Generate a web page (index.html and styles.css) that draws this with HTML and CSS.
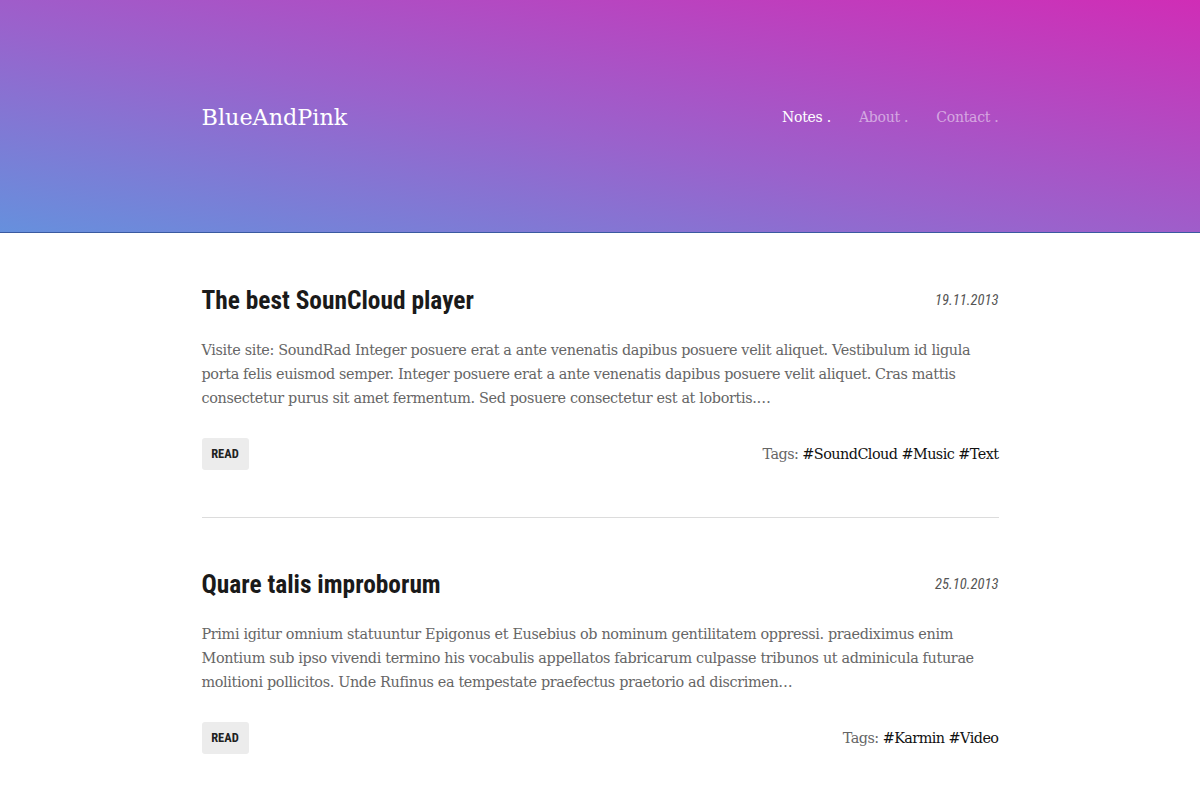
FILE: index.html
```html
<!DOCTYPE html>
<html lang="en">
<head>
<meta charset="utf-8">
<title>BlueAndPink</title>
<link rel="stylesheet" href="styles.css">
</head>
<body>
<header class="site-header">
  <div class="container header-inner">
    <a class="logo" href="#">BlueAndPink</a>
    <nav class="nav">
      <a class="nav-link active" href="#">Notes .</a>
      <a class="nav-link" href="#">About .</a>
      <a class="nav-link" href="#">Contact .</a>
    </nav>
  </div>
</header>
<main class="container">
  <article class="post">
    <div class="post-head">
      <h2 class="post-title">The best SounCloud player</h2>
      <span class="post-date">19.11.2013</span>
    </div>
    <p class="post-text">Visite site: SoundRad Integer posuere erat a ante venenatis dapibus posuere velit aliquet. Vestibulum id ligula porta felis euismod semper. Integer posuere erat a ante venenatis dapibus posuere velit aliquet. Cras mattis consectetur purus sit amet fermentum. Sed posuere consectetur est at lobortis.…</p>
    <div class="post-foot">
      <a class="btn-read" href="#">READ</a>
      <div class="tags">Tags: <a href="#">#SoundCloud</a> <a href="#">#Music</a> <a href="#">#Text</a></div>
    </div>
  </article>
  <article class="post">
    <div class="post-head">
      <h2 class="post-title">Quare talis improborum</h2>
      <span class="post-date">25.10.2013</span>
    </div>
    <p class="post-text">Primi igitur omnium statuuntur Epigonus et Eusebius ob nominum gentilitatem oppressi. praediximus enim Montium sub ipso vivendi termino his vocabulis appellatos fabricarum culpasse tribunos ut adminicula futurae molitioni pollicitos. Unde Rufinus ea tempestate praefectus praetorio ad discrimen…</p>
    <div class="post-foot">
      <a class="btn-read" href="#">READ</a>
      <div class="tags">Tags: <a href="#">#Karmin</a> <a href="#">#Video</a></div>
    </div>
  </article>
</main>
</body>
</html>
```

FILE: styles.css
```css
html, body {
  margin: 0;
  padding: 0;
  background: #fff;
}
body {
  font-family: "Roboto Slab", "DejaVu Serif", serif;
  color: #666;
}
a { text-decoration: none; }

.container {
  width: 797px;
  margin: 0 auto;
}

.site-header {
  height: 232px;
  background: linear-gradient(to top right, #6690dd 0%, #9a62cc 45%, #d02db6 100%);
  border-bottom: 1px solid #3a5aa0;
}
.header-inner {
  display: flex;
  align-items: center;
  justify-content: space-between;
  padding-top: 101px;
}
.logo {
  font-family: "Roboto Slab", "DejaVu Serif", serif;
  font-size: 22.3px;
  line-height: 32px;
  color: #fff;
}
.nav {
  display: flex;
  gap: 28px;
}
.nav-link {
  font-family: "Roboto Slab", "DejaVu Serif", serif;
  font-size: 14px;
  letter-spacing: -0.25px;
  color: rgba(255,255,255,0.5);
}
.nav-link.active {
  color: #fff;
}

.post {
  padding: 52px 0 47px;
  border-bottom: 1px solid #dcdcdc;
}
.post + .post {
  padding-top: 51px;
}
.post:last-child { border-bottom: none; }
.post-head {
  display: flex;
  justify-content: space-between;
  align-items: center;
}
.post-title {
  margin: 0;
  font-family: "Roboto Condensed", "Roboto", sans-serif;
  font-stretch: condensed;
  font-weight: 700;
  font-size: 25.4px;
  line-height: 30px;
  color: #1a1a1a;
}
.post-date {
  font-family: "Roboto Condensed", "Roboto", sans-serif;
  font-stretch: condensed;
  font-style: italic;
  font-size: 14.6px;
  color: #555;
}
.post-text {
  margin: 23px 0 0;
  font-size: 14.4px;
  letter-spacing: -0.35px;
  line-height: 24px;
  color: #666;
}
.post-foot {
  display: flex;
  justify-content: space-between;
  align-items: center;
  margin-top: 28px;
}
.btn-read {
  display: inline-block;
  background: #ececec;
  border-radius: 3px;
  width: 47px;
  height: 32px;
  line-height: 32px;
  text-align: center;
  font-family: "Roboto Condensed", "Roboto", sans-serif;
  font-stretch: condensed;
  font-weight: 700;
  font-size: 12.5px;
  color: #222;
}
.tags {
  font-size: 14.4px;
  letter-spacing: -0.55px;
  color: #666;
}
.tags a {
  color: #111;
}
```
